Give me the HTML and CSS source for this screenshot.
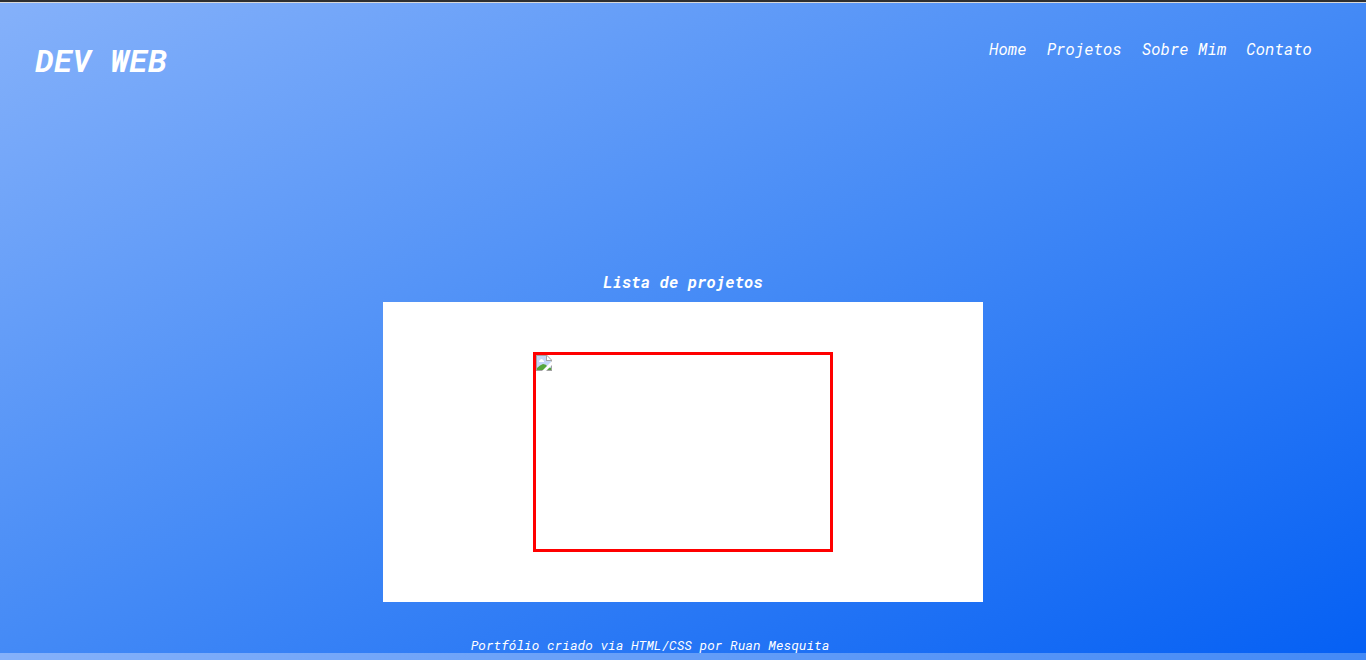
FILE: index.html
```html
<!DOCTYPE html>
<html lang="pt-BR">
<head>
<meta charset="utf-8">
<title>DEV WEB</title>
<link rel="stylesheet" href="styles.css">
</head>
<body>
<div class="page">
  <header class="header">
    <h1 class="logo">DEV WEB</h1>
    <nav class="nav">
      <a href="#home">Home</a>
      <a href="#projetos">Projetos</a>
      <a href="#sobre">Sobre Mim</a>
      <a href="#contato">Contato</a>
    </nav>
  </header>
  <main class="projects" id="projetos">
    <h2 class="projects-title">Lista de projetos</h2>
    <div class="panel">
      <div class="project">
        <svg class="missing" width="16" height="16" viewBox="0 0 16 16" aria-hidden="true">
          <path d="M0 0H11L16 5V16H0Z" fill="#a3a3a3"/>
          <path d="M1 1H10V6H15V15H1Z" fill="#c4d6f6"/>
          <path d="M11 1V5H15Z" fill="#fff"/>
          <path d="M3 7V6L4 5L5 4H6L7 5L8 6V7Z" fill="#fff"/>
          <path d="M1 15V13Q4 10 7 9Q10 9 12 12L15 13V15Z" fill="#55a63c"/>
          <path d="M6 16L16 6V10L10 16Z" fill="#fff"/>
        </svg>
      </div>
    </div>
  </main>
  <footer class="footer">Portfólio criado via HTML/CSS por Ruan Mesquita</footer>
</div>
</body>
</html>
```
FILE: styles.css
```css
* {
  box-sizing: border-box;
}

html {
  background: #85b1fa;
}

body {
  margin: 0;
  min-height: 100vh;
  border-top: 2px solid #2e2f30;
  font-family: "Roboto Mono", "Liberation Mono", monospace;
  font-style: italic;
  color: #fff;
  background: linear-gradient(to bottom right, #85b1fa, #448af6, #0560f4) 0 1px / 100% 650px repeat-y;
}

.page {
  border-top: 1px solid #d8d8d8;
}

.header {
  display: flex;
  justify-content: space-between;
  align-items: flex-start;
  padding: 36px 54px 0 35px;
}

.logo {
  margin: 0;
  font-size: 32px;
  line-height: 42px;
}

.nav {
  display: flex;
  gap: 20px;
  font-size: 16px;
  line-height: 20px;
}

.nav a {
  color: inherit;
  text-decoration: none;
}

.projects {
  display: flex;
  flex-direction: column;
  align-items: center;
  padding-top: 191px;
}

.projects-title {
  margin: 0 0 10px;
  font-size: 16px;
  line-height: 20px;
}

.panel {
  display: flex;
  justify-content: center;
  width: 100%;
  max-width: 600px;
  padding: 50px 0;
  background: #fff;
}

.project {
  width: 300px;
  height: 200px;
  border: 3px solid #f00;
}

.missing {
  display: block;
}

.footer {
  padding: 34px 66px 0 0;
  font-size: 13px;
  line-height: 18px;
  text-align: center;
}
```
